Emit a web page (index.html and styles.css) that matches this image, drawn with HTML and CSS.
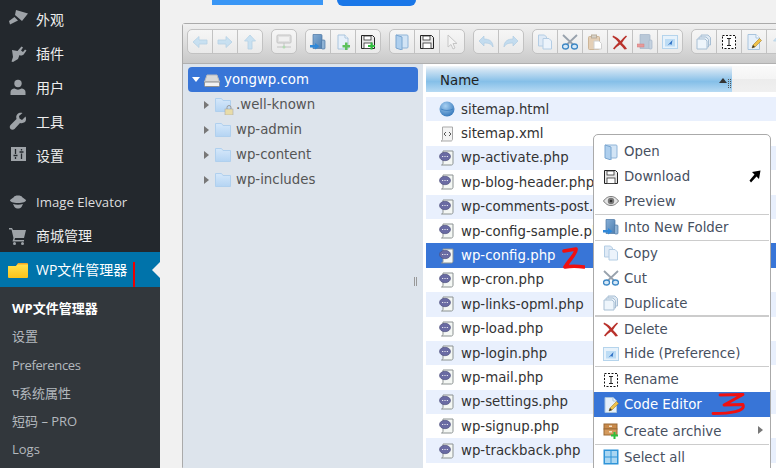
FILE: index.html
```html
<!DOCTYPE html>
<html lang="zh-CN">
<head>
<meta charset="utf-8">
<title>WP文件管理器</title>
<link rel="stylesheet" href="styles.css">
</head>
<body>
<svg class="sprite" width="0" height="0" aria-hidden="true">
  <defs>
    <linearGradient id="gFolder" x1="0" y1="0" x2="0" y2="1"><stop offset="0" stop-color="#d6e8fa"/><stop offset="1" stop-color="#b4d4f3"/></linearGradient>
    <linearGradient id="gDark" x1="0" y1="0" x2="1" y2="1"><stop offset="0" stop-color="#86aed6"/><stop offset="1" stop-color="#4f7fb0"/></linearGradient>
    <linearGradient id="gYellow" x1="0" y1="0" x2="0" y2="1"><stop offset="0" stop-color="#ffe14d"/><stop offset="1" stop-color="#fbc21a"/></linearGradient>
    <radialGradient id="gGlobe" cx=".4" cy=".3" r=".8"><stop offset="0" stop-color="#a7d0f2"/><stop offset="1" stop-color="#2a6fb5"/></radialGradient>
    <symbol id="i-back" viewBox="0 0 16 16"><path d="M1 8l6-5.500V6h8v4H7v3.500z" fill="#bcdcf2" stroke="#a3c8e2" stroke-width=".8"/></symbol>
    <symbol id="i-fwd" viewBox="0 0 16 16"><path d="M15 8L9 2.500V6H1v4h8v3.500z" fill="#bcdcf2" stroke="#a3c8e2" stroke-width=".8"/></symbol>
    <symbol id="i-up" viewBox="0 0 16 16"><path d="M8 1l5.500 6H10v8H6V7H2.500z" fill="#bcdcf2" stroke="#a3c8e2" stroke-width=".8"/></symbol>
    <symbol id="i-net" viewBox="0 0 16 16"><rect x="1" y="1" width="14" height="8" rx="1" fill="#dcdcdc" stroke="#b4b4b4"/><rect x="3" y="3" width="10" height="4" fill="#f0f0f0"/><path d="M8 9v3M1 13h14" stroke="#b4b4b4"/><circle cx="8" cy="13" r="1.500" fill="#9fd49f"/></symbol>
    <symbol id="i-open" viewBox="0 0 16 16"><path d="M2 1h11a1 1 0 011 1v11a1 1 0 01-1 1H8" fill="#d2e4f5" stroke="#8fb4d8"/><path d="M2 1l6 2v13l-6-2z" fill="#aecfee" stroke="#7ba6d0"/></symbol>
    <symbol id="i-newfolder" viewBox="0 0 16 16"><path d="M3 .5h8a1 1 0 011 1v13H3z" fill="url(#gDark)" stroke="#4b76a3" stroke-width=".7"/><rect x="11.500" y="6" width="3.500" height="9" rx="1" fill="#8fb2d4" stroke="#4b76a3" stroke-width=".7"/><path d="M0 11h5V9l4.500 3.250L5 15.500V13.500H0z" fill="#2f88d8"/></symbol>
    <symbol id="i-newfile" viewBox="0 0 16 16"><path d="M3 1h7l3 3v11H3z" fill="#e6f0fa" stroke="#a9c4dd"/><path d="M10 1v3h3" fill="#fff" stroke="#a9c4dd"/><path d="M10 8.500h2.500V11H15v2.500h-2.500V16H10v-2.500H7.500V11H10z" fill="#5cc15c"/></symbol>
    <symbol id="i-save" viewBox="0 0 16 16"><path d="M1.500 1.500h11l2 2v11h-13z" fill="#e8e8e8" stroke="#222"/><rect x="4" y="2" width="7" height="4" fill="#fff" stroke="#333" stroke-width=".8"/><rect x="4" y="9" width="8" height="5.500" fill="#fff" stroke="#333" stroke-width=".8"/></symbol>
    <symbol id="i-newsave" viewBox="0 0 16 16"><use href="#i-save"/><path d="M10.500 8.500h2V11H15v2h-2.500v2.500h-2V13H8v-2h2.500z" fill="#2fbf3f"/></symbol>
    <symbol id="i-cursor" viewBox="0 0 16 16"><path d="M4 1v12l3-2.500 2 4.500 2-1-2-4.500h4z" fill="#f4f4f4" stroke="#c6c6c6"/></symbol>
    <symbol id="i-undo" viewBox="0 0 16 16"><path d="M1 7l5-5v3c5 0 9 2 9 8-1.500-3-4-4-9-4v3z" fill="#b5d6ef" stroke="#94bcdc" stroke-width=".6"/></symbol>
    <symbol id="i-redo" viewBox="0 0 16 16"><path d="M15 7l-5-5v3C5 5 1 7 1 13c1.500-3 4-4 9-4v3z" fill="#b5d6ef" stroke="#94bcdc" stroke-width=".6"/></symbol>
    <symbol id="i-copy" viewBox="0 0 16 16"><path d="M1.500 1h6l2 2v9h-8z" fill="#dfeaf6" stroke="#b4cde4"/><path d="M6 4.500h6l2.500 2.500v8H6z" fill="#ecf3fb" stroke="#b4cde4"/></symbol>
    <symbol id="i-cut" viewBox="0 0 16 16"><path d="M1 1l10 9.500M15 1L5 10.500" stroke="#98a2ad" stroke-width="1.800" fill="none"/><ellipse cx="3.500" cy="12.500" rx="3" ry="2.500" fill="#d5e8f7" stroke="#3d87c4" stroke-width="1.300"/><ellipse cx="12.500" cy="12.500" rx="3" ry="2.500" fill="#d5e8f7" stroke="#3d87c4" stroke-width="1.300"/></symbol>
    <symbol id="i-paste" viewBox="0 0 16 16"><rect x="1.500" y="2.500" width="11" height="13" rx="1" fill="#e4cfb6" stroke="#cdb597"/><rect x="4.500" y="1" width="5" height="3" fill="#d7d2c9" stroke="#b9ad9a"/><path d="M7 7h5l2.500 2.500V15H7z" fill="#fff" stroke="#d0d0d0"/></symbol>
    <symbol id="i-del" viewBox="0 0 16 16"><path d="M1 1.500c3.500 1.500 6 3.500 7.500 5.500 2-2 3.500-4 5.500-5.500l1 1C13 4.500 11.500 6.500 10 9c2 2 3.500 3.500 5 6l-2.500.5C11 13.500 9.500 12 8 10.500 6 12 4 13.500 2.500 15.500L1 14.500c1.500-2 3.500-4 5.500-6C5 6.500 3 4.500 .5 3z" fill="#b9322c"/></symbol>
    <symbol id="i-rmdir" viewBox="0 0 16 16"><path d="M3 .5h9a1 1 0 011 1v13H3z" fill="#b9c8d8" stroke="#a3b5c8" stroke-width=".7"/><rect x="12" y="6" width="3" height="9" rx="1" fill="#c6d3e0" stroke="#a3b5c8" stroke-width=".7"/><rect x="0" y="10" width="7" height="3" fill="#e69a9a" stroke="#d57b7b" stroke-width=".5"/></symbol>
    <symbol id="i-hide" viewBox="0 0 16 16"><rect x=".5" y="1.500" width="15" height="13" fill="#e7f2fb" stroke="#b5d4ec"/><rect x="3" y="5" width="10" height="7.500" fill="#bcdcf5"/><path d="M5.500 11.500l5-5.500-1 5-1.500-1z" fill="#2c6fc4"/></symbol>
    <symbol id="i-dup" viewBox="0 0 16 16"><path d="M5 1h7l2.500 2.500V11H5z" fill="#dfe9f3" stroke="#a8bfd4"/><path d="M3 3h7l2.500 2.500V13H3z" fill="#e6eff7" stroke="#a8bfd4"/><path d="M1 5h8l2 2v8H1z" fill="#eef5fb" stroke="#a8bfd4"/></symbol>
    <symbol id="i-rename" viewBox="0 0 16 16"><rect x="1.500" y="1.500" width="13" height="13" fill="#fff" stroke="#111" stroke-dasharray="2 1.500"/><path d="M6 4.500h4M6 11.500h4M8 4.500v7" stroke="#222" fill="none"/></symbol>
    <symbol id="i-edit" viewBox="0 0 16 16"><path d="M2 .5h8l3.500 3.500v11.500H2z" fill="#e6f0fa" stroke="#a9c4dd"/><path d="M10 .5V4h3.500" fill="#fff" stroke="#a9c4dd"/><path d="M6 14l1-3 6.500-6.500 2 2L9 13z" fill="#f0c24a" stroke="#a4812c" stroke-width=".6"/><path d="M6 14l1-3 2 2z" fill="#333"/></symbol>
    <symbol id="i-archive" viewBox="0 0 16 16"><rect x="1" y="1" width="13" height="5" fill="#c98a4b" stroke="#9b6a36"/><rect x="1" y="6" width="13" height="6" fill="#d59a5c" stroke="#9b6a36"/><rect x="6" y="2.500" width="3" height="1.500" fill="#f4e3c8"/><rect x="6" y="8" width="3" height="1.500" fill="#f4e3c8"/><path d="M10.500 9h2v2.500H15v2h-2.500V16h-2v-2.500H8v-2h2.500z" fill="#2fbf3f"/></symbol>
    <symbol id="i-select" viewBox="0 0 16 16"><rect x=".5" y=".5" width="15" height="15" fill="#2f94d8"/><rect x="2" y="2" width="5.500" height="5.500" fill="#a9d6f2"/><rect x="8.500" y="2" width="5.500" height="5.500" fill="#a9d6f2"/><rect x="2" y="8.500" width="5.500" height="5.500" fill="#a9d6f2"/><rect x="8.500" y="8.500" width="5.500" height="5.500" fill="#a9d6f2"/></symbol>
    <symbol id="i-eye" viewBox="0 0 16 16"><path d="M.5 8C3 4.500 5.500 3.500 8 3.500S13 4.500 15.500 8C13 11.500 10.500 12.500 8 12.500S3 11.500 .5 8z" fill="#e4e4e4" stroke="#777"/><circle cx="8" cy="8" r="3.200" fill="#777"/><circle cx="8" cy="8" r="1.300" fill="#333"/></symbol>
    <symbol id="i-html" viewBox="0 0 16 16"><circle cx="8" cy="8" r="7.500" fill="url(#gGlobe)"/><path d="M2 8c4 2 8 2 12 0" stroke="#2a6fb5" fill="none" stroke-width=".6"/></symbol>
    <symbol id="i-xml" viewBox="0 0 16 16"><path d="M3.500 1h10v12c0 1-.5 2-1.500 2H2c1 0 1.500-1 1.500-2z" fill="#f4f4f4" stroke="#a9a9a9"/><path d="M7 6L5 8l2 2M10 6l2 2-2 2" stroke="#444" fill="none" stroke-width=".9"/></symbol>
    <symbol id="i-php" viewBox="0 0 16 16"><path d="M4 1h10v12c0 1-.5 2-1.500 2H2.500c1 0 1.500-1 1.500-2z" fill="#f4f7f4" stroke="#8c9292"/><ellipse cx="6" cy="6.500" rx="5.500" ry="4.200" fill="#6a6ba3" stroke="#4a4b78" stroke-width=".6"/><path d="M3.200 6.500h1M5.500 6.500h1M7.800 6.500h1" stroke="#fff" stroke-width="1"/></symbol>
    <symbol id="i-dir" viewBox="0 0 16 16"><path d="M.5 1.500h6l1.500 2h7.500v11H.5z" fill="url(#gFolder)" stroke="#b0d0ee"/></symbol>
    <symbol id="i-drive" viewBox="0 0 16 16"><path d="M3 3h10l2.500 7h-15z" fill="#d9d9d9" stroke="#bbb"/><rect x=".5" y="10" width="15" height="4.500" rx="1" fill="#f2f2f2" stroke="#8f8f8f"/></symbol>
  </defs>
</svg>

<div class="page">
  <aside class="sidebar">
    <nav class="menu">
      <a class="menu-item">
        <svg class="menu-icon" viewBox="0 0 20 20"><path d="M8 0l12 3.500-6 7.500-7-6zM1 11l5.500-4 3.500 3.500L2 14.500z" fill="#9ea3a8"/></svg>
        <span class="cjk">外观</span>
      </a>
      <a class="menu-item">
        <svg class="menu-icon" viewBox="0 0 20 20"><path d="M13.500 2.500l1.500 1-2 3 2 1.500 2-2.500 1.500 1-2.500 3.500c-1 1.500-3 2-4.500 1L10 15l-5 3-1.500-.5L5 13 4 6l5.500 1z" fill="#9ea3a8"/></svg>
        <span class="cjk">插件</span>
      </a>
      <a class="menu-item">
        <svg class="menu-icon" viewBox="0 0 20 20"><circle cx="10" cy="5.500" r="3.700" fill="#9ea3a8"/><path d="M2.500 17v-3c0-2 2-3.500 4-3.500 2 1.500 5 1.500 7 0 2 0 4 1.500 4 3.500v3z" fill="#9ea3a8"/></svg>
        <span class="cjk">用户</span>
      </a>
      <a class="menu-item">
        <svg class="menu-icon" viewBox="0 0 20 20"><path d="M17.500 4.500L14 8l-2.500-1.500L11 4l3.500-3c-2-.5-4 0-5 1-1.500 1.500-1.500 3-1 5L2.500 13c-1 1-1 3 0 4s3 1 4 0L12 11c2 .5 3.500 0 5-1 1-1 1.500-3.500.5-5.500z" fill="#9ea3a8"/></svg>
        <span class="cjk">工具</span>
      </a>
      <a class="menu-item">
        <svg class="menu-icon" viewBox="0 0 20 20"><path d="M3 1h15v14H3z" fill="#9ea3a8"/><path d="M7.500 3v5M5.500 9.500h4M7.500 11v2M13.500 3v1.500M11.500 6h4M13.500 7.500V13" stroke="#23282d" stroke-width="1.300"/></svg>
        <span class="cjk">设置</span>
      </a>
      <div class="menu-gap"></div>
      <a class="menu-item">
        <svg class="menu-icon" viewBox="0 0 20 20"><path d="M6 5c0-2 8-2 8 0l4 3c0 2-3 3-8 3S2 10 2 8zM5 12c3 1 7 1 10 0l-1.500 3c-2 2-5 2-7 0z" fill="#9ea3a8"/></svg>
        <span class="latin">Image Elevator</span>
      </a>
      <a class="menu-item">
        <svg class="menu-icon" viewBox="0 0 20 20"><path d="M1 2h3l1 2h13l-2 8H7l-.5 2H16v1.500H4.500L5.500 12 3.500 3.500H1z" fill="#9ea3a8"/><circle cx="6.500" cy="17.500" r="1.500" fill="#9ea3a8"/><circle cx="14.500" cy="17.500" r="1.500" fill="#9ea3a8"/></svg>
        <span class="cjk">商城管理</span>
      </a>
      <a class="menu-item menu-current">
        <svg class="menu-folder" viewBox="0 0 20 15"><path d="M0 3h8l2-3h9a1 1 0 011 1v2H0z" fill="#f4a623"/><path d="M0 3h8l1.500-1.500H20V14a1 1 0 01-1 1H1a1 1 0 01-1-1z" fill="url(#gYellow)"/></svg>
        <span class="cjk">WP文件管理器</span>
      </a>
      <ul class="submenu">
        <li class="sub-current">WP文件管理器</li>
        <li>设置</li>
        <li class="sub-tight">Preferences</li>
        <li>प系统属性</li>
        <li>短码 – PRO</li>
        <li>Logs</li>
      </ul>
    </nav>
    <i class="red-mark"></i>
  </aside>

  <main class="main">
    <div class="topbar">
      <span class="top-link"></span>
      <span class="top-button"></span>
    </div>

    <section class="fm">
      <div class="toolbar">
        <div class="tb-group">
          <span class="tb-btn dim"><svg><use href="#i-back"/></svg></span>
          <span class="tb-btn dim"><svg><use href="#i-fwd"/></svg></span>
          <span class="tb-btn dim"><svg><use href="#i-up"/></svg></span>
        </div>
        <div class="tb-group">
          <span class="tb-btn dim"><svg><use href="#i-net"/></svg></span>
        </div>
        <div class="tb-group">
          <span class="tb-btn"><svg><use href="#i-newfolder"/></svg></span>
          <span class="tb-btn"><svg><use href="#i-newfile"/></svg></span>
          <span class="tb-btn"><svg><use href="#i-newsave"/></svg></span>
        </div>
        <div class="tb-group">
          <span class="tb-btn"><svg><use href="#i-open"/></svg></span>
          <span class="tb-btn"><svg><use href="#i-save"/></svg></span>
          <span class="tb-btn"><svg><use href="#i-cursor"/></svg></span>
        </div>
        <div class="tb-group">
          <span class="tb-btn dim"><svg><use href="#i-undo"/></svg></span>
          <span class="tb-btn dim"><svg><use href="#i-redo"/></svg></span>
        </div>
        <div class="tb-group">
          <span class="tb-btn"><svg><use href="#i-copy"/></svg></span>
          <span class="tb-btn"><svg><use href="#i-cut"/></svg></span>
          <span class="tb-btn"><svg><use href="#i-paste"/></svg></span>
          <span class="tb-btn"><svg><use href="#i-del"/></svg></span>
          <span class="tb-btn"><svg><use href="#i-rmdir"/></svg></span>
          <span class="tb-btn"><svg><use href="#i-hide"/></svg></span>
        </div>
        <div class="tb-group">
          <span class="tb-btn"><svg><use href="#i-dup"/></svg></span>
          <span class="tb-btn"><svg><use href="#i-rename"/></svg></span>
          <span class="tb-btn"><svg><use href="#i-edit"/></svg></span>
          <span class="tb-btn dim"><svg><use href="#i-up"/></svg></span>
        </div>
      </div>

      <div class="workzone">
        <div class="tree">
          <div class="tree-root">
            <i class="caret-down"></i>
            <svg class="ico"><use href="#i-drive"/></svg>
            <span>yongwp.com</span>
          </div>
          <div class="tree-row">
            <i class="caret-right"></i>
            <span class="locked"><svg class="ico"><use href="#i-dir"/></svg><svg class="lock" viewBox="0 0 10 10"><rect x="1" y="4" width="8" height="6" fill="#e8dca8" stroke="#aaa" stroke-width=".6"/><path d="M3 4V2.500a2 2 0 014 0V4" fill="none" stroke="#999"/></svg></span>
            <span>.well-known</span>
          </div>
          <div class="tree-row"><i class="caret-right"></i><svg class="ico"><use href="#i-dir"/></svg><span>wp-admin</span></div>
          <div class="tree-row"><i class="caret-right"></i><svg class="ico"><use href="#i-dir"/></svg><span>wp-content</span></div>
          <div class="tree-row"><i class="caret-right"></i><svg class="ico"><use href="#i-dir"/></svg><span>wp-includes</span></div>
          <span class="tree-grip"></span>
        </div>

        <div class="files">
          <div class="head-row">
            <div class="head-name">Name<i class="sort-up"></i><i class="col-grip"></i></div>
            <div class="head-rest"></div>
          </div>
          <div class="file-row odd"><svg class="ico"><use href="#i-html"/></svg><span>sitemap.html</span></div>
          <div class="file-row"><svg class="ico"><use href="#i-xml"/></svg><span>sitemap.xml</span></div>
          <div class="file-row odd"><svg class="ico"><use href="#i-php"/></svg><span>wp-activate.php</span></div>
          <div class="file-row"><svg class="ico"><use href="#i-php"/></svg><span>wp-blog-header.php</span></div>
          <div class="file-row odd"><svg class="ico"><use href="#i-php"/></svg><span>wp-comments-post.php</span></div>
          <div class="file-row"><svg class="ico"><use href="#i-php"/></svg><span>wp-config-sample.php</span></div>
          <div class="file-row selected"><svg class="ico"><use href="#i-php"/></svg><span>wp-config.php</span></div>
          <div class="file-row"><svg class="ico"><use href="#i-php"/></svg><span>wp-cron.php</span></div>
          <div class="file-row odd"><svg class="ico"><use href="#i-php"/></svg><span>wp-links-opml.php</span></div>
          <div class="file-row"><svg class="ico"><use href="#i-php"/></svg><span>wp-load.php</span></div>
          <div class="file-row odd"><svg class="ico"><use href="#i-php"/></svg><span>wp-login.php</span></div>
          <div class="file-row"><svg class="ico"><use href="#i-php"/></svg><span>wp-mail.php</span></div>
          <div class="file-row odd"><svg class="ico"><use href="#i-php"/></svg><span>wp-settings.php</span></div>
          <div class="file-row"><svg class="ico"><use href="#i-php"/></svg><span>wp-signup.php</span></div>
          <div class="file-row odd"><svg class="ico"><use href="#i-php"/></svg><span>wp-trackback.php</span></div>
        </div>
      </div>
    </section>
  </main>
</div>

<div class="ctx">
  <div class="ctx-item"><svg class="ico"><use href="#i-open"/></svg>Open</div>
  <div class="ctx-item"><svg class="ico"><use href="#i-save"/></svg>Download</div>
  <div class="ctx-item"><svg class="ico"><use href="#i-eye"/></svg>Preview</div>
  <hr class="ctx-sep">
  <div class="ctx-item"><svg class="ico"><use href="#i-newfolder"/></svg>Into New Folder</div>
  <hr class="ctx-sep">
  <div class="ctx-item"><svg class="ico"><use href="#i-copy"/></svg>Copy</div>
  <div class="ctx-item"><svg class="ico"><use href="#i-cut"/></svg>Cut</div>
  <div class="ctx-item"><svg class="ico"><use href="#i-dup"/></svg>Duplicate</div>
  <hr class="ctx-sep">
  <div class="ctx-item"><svg class="ico"><use href="#i-del"/></svg>Delete</div>
  <div class="ctx-item"><svg class="ico"><use href="#i-hide"/></svg>Hide (Preference)</div>
  <hr class="ctx-sep">
  <div class="ctx-item"><svg class="ico"><use href="#i-rename"/></svg>Rename</div>
  <div class="ctx-item ctx-hover"><svg class="ico"><use href="#i-edit"/></svg>Code Editor</div>
  <div class="ctx-item ctx-tall"><svg class="ico"><use href="#i-archive"/></svg>Create archive<i class="ctx-arrow"></i></div>
  <hr class="ctx-sep">
  <div class="ctx-item"><svg class="ico"><use href="#i-select"/></svg>Select all</div>
</div>

<svg class="cursor-mark" viewBox="0 0 12 13"><path d="M11.500 .5L3 2l2.500 2.500L.5 10.500l1.500 2L7.500 6.500 10 9z" fill="#000"/></svg>
<svg class="scribble scribble-two" viewBox="0 0 24 26"><path d="M3 6l12-2c1 4-7 11-11 18 6-1 12-1 19 0" fill="none" stroke="#f01010" stroke-width="3.600" stroke-linecap="round" stroke-linejoin="round"/></svg>
<svg class="scribble scribble-three" viewBox="0 0 36 26"><path d="M9 3l23-.5-19 10.500 19-.5c3 7-13 9-30 9" fill="none" stroke="#f01010" stroke-width="2.800" stroke-linecap="round" stroke-linejoin="round"/></svg>
</body>
</html>
```

FILE: styles.css
```css
* { box-sizing: border-box; }
html, body { margin: 0; height: 468px; overflow: hidden; }
body { position: relative; width: 776px; background: #f1f1f1; font-family: "DejaVu Sans", sans-serif; font-size: 13.330px; }
.sprite { position: absolute; }

.page { display: flex; height: 468px; }

/* admin sidebar */
.sidebar { position: relative; flex: 0 0 160px; height: 468px; background: #23282d; overflow: hidden; font-family: "Open Sans", "Noto Sans CJK SC", sans-serif; }
.menu { padding-top: 3px; }
.menu-item { display: flex; align-items: center; height: 34px; color: #eee; font-size: 14px; }
.menu-icon { flex: 0 0 20px; width: 20px; height: 20px; margin: 0 8px 0 8px; }
.menu-gap { height: 12px; }
.cjk { padding-bottom: 2px; }
.latin { font-size: 13.200px; color: #ddd; }
.menu-current { height: 35px; margin-top: -1px; background: #0073aa; color: #fff; position: relative; }
.menu-folder { flex: 0 0 20px; width: 20px; height: 15px; margin: 1px 8px 0 8px; }
.menu-current::after { content: ""; position: absolute; right: 0; top: 10px; border: 8px solid transparent; border-right-color: #f1f1f1; border-left-width: 0; }
.submenu { margin: 0; padding: 7px 0 0; list-style: none; background: #32373c; color: #b4b9be; font-size: 13px; height: 200px; }
.submenu li { height: 28.300px; line-height: 28px; padding-left: 12px; }
.submenu .sub-current { color: #fff; font-weight: 700; }
.submenu .sub-tight { letter-spacing: -.35px; }
.red-mark { position: absolute; left: 133px; top: 262px; width: 2px; height: 25px; background: #f00000; }

/* page body */
.main { flex: 1 1 0; min-width: 0; overflow: hidden; }
.topbar { display: flex; align-items: flex-start; height: 23px; padding-left: 52px; gap: 14px; }
.top-link { width: 111px; height: 5px; background: #3a96f5; }
.top-button { width: 79px; height: 6px; background: #1a77e8; border-radius: 0 0 6px 6px; }

/* file manager */
.fm { margin-left: 22px; width: 640px; height: 445px; border: 1px solid #aaa; border-radius: 3px 0 0 0; background: #fff; }
.toolbar { display: flex; gap: 8px; height: 40px; padding: 5px 0 0 4px; background: linear-gradient(#f0f0f0, #c9c9c9); border-bottom: 1px solid #b0b0b0; }
.tb-group { display: flex; flex: none; height: 25px; border: 1px solid #c2c2c2; border-radius: 5px; background: linear-gradient(#f6f6f6, #e9e9e9); }
.tb-btn { display: flex; align-items: center; justify-content: center; width: 25px; height: 23px; border-left: 1px solid #c2c2c2; }
.tb-btn:first-child { border-left: 0; width: 24px; }
.tb-btn svg { width: 16px; height: 16px; }
.tb-btn.dim svg { opacity: .75; }

.workzone { display: flex; height: 404px; }
.ico { flex: none; width: 16px; height: 16px; }

.tree { position: relative; flex: 0 0 240px; padding: 3px 5px 0; background: #dde4ec; color: #555; }
.tree-root { display: flex; align-items: center; height: 25px; padding-left: 3px; border-radius: 4px; background: #3875d7; color: #fff; }
.tree-root .ico { margin: 0 4px 0 4px; }
.tree-row { display: flex; align-items: center; height: 25px; padding-left: 16px; }
.tree-row .ico { margin-right: 5px; }
.locked { position: relative; display: flex; }
.lock { position: absolute; left: 9px; top: 8px; width: 10px; height: 10px; }
.caret-down { width: 0; height: 0; border: 4px solid transparent; border-top: 5px solid #fff; border-bottom: 0; margin-left: 1px; }
.caret-right { width: 0; height: 0; margin-right: 6px; border: 4px solid transparent; border-left: 5px solid #777; border-right: 0; }
.tree-grip { position: absolute; right: 6px; top: 213px; width: 3px; height: 9px; border-left: 1px solid #999; border-right: 1px solid #999; }

.files { flex: 1 1 0; min-width: 0; padding: 2px 0 0 3px; background: #fff; color: #333; overflow: hidden; }
.head-row { display: flex; height: 26px; margin-bottom: 5px; }
.head-name { position: relative; flex: 0 0 306px; padding-left: 14px; line-height: 29px; color: #222; background: linear-gradient(#f4f8fb 0%, #cfe3f3 15%, #85bfe8 60%, #b7daf3 100%); }
.head-rest { flex: 1 1 0; background: linear-gradient(#fafafa 0, #f4f4f4 50%, #ececec 51%, #f0f0f0 100%); }
.sort-up { position: absolute; right: 5px; top: 12px; border: 4px solid transparent; border-bottom: 5px solid #333; border-top: 0; }
.col-grip { position: absolute; right: 1px; top: 13px; width: 3px; height: 9px; border-left: 1px dotted #555; border-right: 1px dotted #555; }
.file-row { display: flex; align-items: center; gap: 6px; height: 24.400px; padding-left: 13px; white-space: nowrap; }
.file-row.odd { background: #e9f0fd; }
.file-row.selected { background: #3875d7; color: #fff; }

/* context menu */
.ctx { position: absolute; left: 593px; top: 134px; width: 178px; padding: 4.500px 0; border: 1px solid #aaa; border-radius: 5px; background: #fff; color: #47505f; }
.ctx-item { position: relative; display: flex; align-items: center; gap: 5px; height: 24.800px; padding-left: 9px; white-space: nowrap; }
.ctx-tall { height: 26.600px; padding-top: 2px; }
.ctx-hover { background: #3875d7; color: #fff; }
.ctx-sep { height: 1.200px; margin: 0 1px; border: 0; background: #ccc; }
.ctx-arrow { position: absolute; right: 7px; top: 9px; border: 4px solid transparent; border-left: 5px solid #777; border-right: 0; }

/* annotations */
.cursor-mark { position: absolute; left: 749px; top: 170px; width: 12px; height: 13px; }
.scribble { position: absolute; }
.scribble-two { left: 561px; top: 245px; width: 24px; height: 26px; }
.scribble-three { left: 711px; top: 392px; width: 36px; height: 26px; }
```
